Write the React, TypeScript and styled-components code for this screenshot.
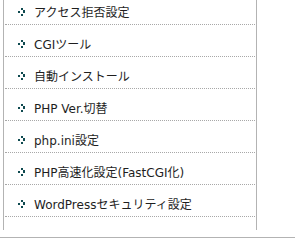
import React from 'react';
import styled, { createGlobalStyle } from 'styled-components';

const GlobalStyle = createGlobalStyle`
    body {
        margin: 0;
        background: #fff;
        font-family: "DejaVu Sans", "Noto Sans CJK JP", sans-serif;
    }
`;

const Frame = styled.div`
    width: 295px;
    height: 237px;
    border-bottom: 1px solid #b3b3b3;
    overflow: hidden;
`;

const Panel = styled.div`
    margin-left: 3px;
    width: 254px;
    height: 237px;
    box-sizing: border-box;
    border-left: 1px solid #b3b3b3;
    border-right: 1px solid #b3b3b3;
    padding: 0 1px;
`;

const Menu = styled.ul`
    list-style: none;
    margin: -7px 0 0 0;
    padding: 0;
`;

const Item = styled.li`
    display: flex;
    align-items: center;
    gap: 8px;
    height: 32px;
    box-sizing: border-box;
    padding: 10px 0 4px 13px;
    border-bottom: 1px dotted #a8a8a8;
    font-size: 12px;
    color: #1e1e1e;
    white-space: nowrap;
`;

const Bullet = styled.svg`
    flex-shrink: 0;
    display: block;
`;

const Arrow = () => (
    <Bullet width="8" height="8" viewBox="0 0 8 8" shapeRendering="crispEdges">
        <g fill="#0f4a50">
            <rect x="3" y="0" width="2" height="2" />
            <rect x="5" y="2" width="2" height="2" />
            <rect x="0" y="3" width="2" height="2" />
            <rect x="5" y="4" width="2" height="1" />
            <rect x="3" y="6" width="2" height="2" />
        </g>
    </Bullet>
);

const items = [
    'アクセス拒否設定',
    'CGIツール',
    '自動インストール',
    'PHP Ver.切替',
    'php.ini設定',
    'PHP高速化設定(FastCGI化)',
    'WordPressセキュリティ設定',
];

const App = () => (
    <>
        <GlobalStyle />
        <Frame>
            <Panel>
                <Menu>
                    {items.map((label) => (
                        <Item key={label}>
                            <Arrow />
                            <span>{label}</span>
                        </Item>
                    ))}
                </Menu>
            </Panel>
        </Frame>
    </>
);

export default App;
